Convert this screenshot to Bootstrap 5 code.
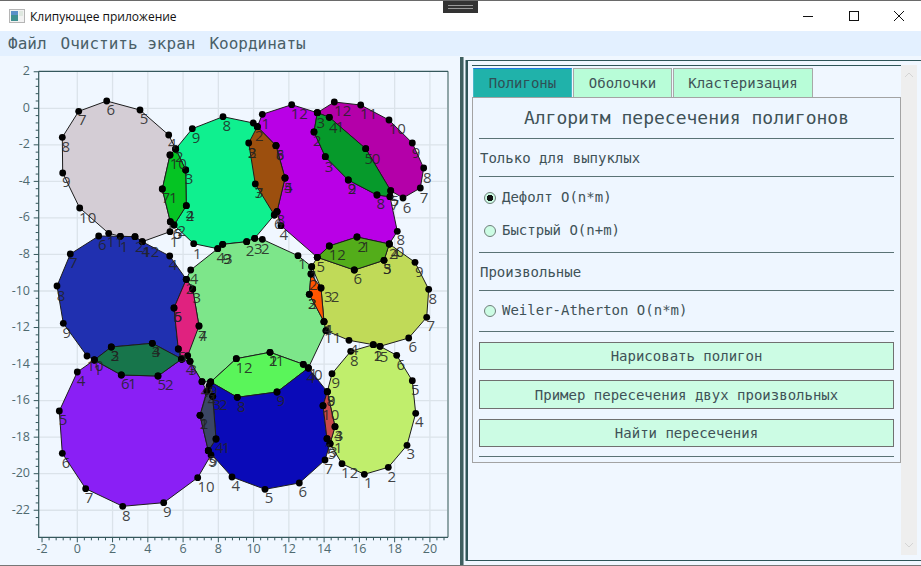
<!DOCTYPE html>
<html lang="ru">
<head>
  <meta charset="UTF-8">
  <title>Клипующее приложение</title>
  <meta name="viewport" content="width=device-width, initial-scale=1.0">
  <link href="https://cdn.jsdelivr.net/npm/bootstrap@5.3.0/dist/css/bootstrap.min.css" rel="stylesheet">
  <style>
    html, body { height: 100%; overflow: hidden; }
    body { background: #f0f7ff; color: #3f5257; font-family: "DejaVu Sans Mono", "Liberation Mono", monospace; font-size: 14px; }
    .app-window { height: 566px; border-top: 1px solid #6a6a6a; border-bottom: 1px solid #777; }
    .title-bar { height: 30px; background: #fff; font: 12px "Open Sans", "Noto Sans", sans-serif; color: #111; padding-left: 9px; }
    .title-bar svg { margin-right: 5px; }
    .win-btns { margin-right: -1px; }
    .win-btn { width: 45.5px; height: 30px; }
    .win-btn svg { margin: 0; }
    .drag-handle { position: absolute; left: 443px; top: 0; width: 35px; height: 12px; background: #333; }
    .drag-handle::after { content: ""; display: block; margin: 4px 5px 0; height: 4px; border-top: 1px solid #999; border-bottom: 1px solid #999; }
    .menu-bar { height: 25px; background: #e3f0ff; font-size: 16px; padding-left: 8px; gap: 14px; color: #4a5f68; }
    .plot-pane { width: 460px; }
    .plot-pane svg { display: block; }
    .plot-pane text { font: 15px "Open Sans", "Noto Sans", sans-serif; fill: #222; fill-opacity: .85; }
    .plot-pane .tick-label { font-size: 12.5px; fill: #4f6a70; fill-opacity: 1; }
    .split-bar { width: 3px; background: #3f5f60; margin-top: 1px; box-shadow: 1px 0 0 #8fa5a8; }
    .right-pane { margin-left: 3px; margin-top: 4px; border-top: 1px solid #2f5558; border-left: 2px solid #2f5558; border-bottom: 1px solid #2f5558; margin-bottom: 4px; padding: 4px 0 0 4px; box-shadow: -1px 0 0 #8fa5a8; }
    .right-col { width: 429px; border-top: 1px solid #2f5558; padding-top: 2px; }
    .fake-scroll { width: 16px; margin: 0 4px 5px 0; background: #eeeeee; position: relative; }
    .fake-scroll svg { position: absolute; left: 3px; }
    .algo-tabs { border-bottom: 0; padding-left: 1px; gap: 1px; }
    .algo-tabs .nav-link { width: 99px; height: 29px; padding: 0; border-radius: 0; border: 1px solid #a8a8a8; border-bottom: 0; background: #b8fdd8; color: #3f5257; font-size: 14px; line-height: 28px; margin: 0; text-align: center; }
    .algo-tabs .nav-link.wide-tab { width: 140px; }
    .algo-tabs .nav-link.active { background: #20b2aa; color: #2f4f55; border: 1px solid #46b8c8; border-top-color: #1e78e0; border-bottom: 0; }
    .tab-holder { height: 366px; border: 1px solid #a3a3a3; background: #eef6ff; padding: 0 6px; }
    .pane-title { height: 40px; font-size: 18px; line-height: 40px; text-align: center; }
    .sep-line { margin: 0; opacity: 1; border: 0; height: 1px; background: #5a7275; }
    .group-label { height: 37px; line-height: 38px; padding-left: 1px; }
    .algo-radio { height: 33px; min-height: 0; margin: 0; padding-left: 5px; display: flex; align-items: center; gap: 6px; }
    .algo-radio .form-check-input { float: none; width: 12px; height: 12px; margin: 0; background-color: #ccfce4; border: 1px solid #6f7f7a; }
    .algo-radio .form-check-input:checked { background-color: #ccfce4; border-color: #6f7f7a; background-image: radial-gradient(circle, #111 0 3px, transparent 3.5px); }
    .algo-radio .form-check-label { color: #3f5257; }
    .radio-first { margin-top: 4px; }
    .radio-last { margin-bottom: 5px; }
    .radio-single { margin: 3px 0 4px; }
    .draw-btn { display: block; width: 100%; height: 28px; padding: 0; margin-bottom: 10px; border: 1px solid #707070; border-radius: 0; background: #ccfce4; color: #3f5257; font-size: 14px; line-height: 26px; }
    .draw-btn.tall-btn { height: 29px; }
    .draw-btn.last-btn { margin-bottom: 9px; }
    .btn-top-sep { margin-bottom: 10px; }
  </style>
</head>
<body>
  <div class="app-window d-flex flex-column position-relative">
    <div class="drag-handle"></div>
    <div class="title-bar d-flex align-items-center">
      <svg width="16" height="14" viewBox="0 0 16 14"><rect x=".5" y=".5" width="15" height="13" fill="#f2f2f2" stroke="#b5b5b5"/><rect x="2" y="2" width="7" height="10" fill="#3f8f8f"/><rect x="2" y="2" width="7" height="4" fill="#5a8fc8"/><rect x="10" y="2" width="4" height="5" fill="#dfe8e0"/></svg>
      <span>Клипующее приложение</span>
      <div class="ms-auto d-flex win-btns">
        <div class="win-btn d-flex align-items-center justify-content-center"><svg width="12" height="12"><path d="M1 6.5H11" stroke="#111"/></svg></div>
        <div class="win-btn d-flex align-items-center justify-content-center"><svg width="12" height="12"><rect x="1.5" y="1.5" width="9" height="9" fill="none" stroke="#111"/></svg></div>
        <div class="win-btn d-flex align-items-center justify-content-center"><svg width="12" height="12"><path d="M1 1L11 11M11 1L1 11" stroke="#111"/></svg></div>
      </div>
    </div>
    <div class="menu-bar d-flex align-items-center">
      <span>Файл</span><span>Очистить экран</span><span>Координаты</span>
    </div>
    <div class="d-flex flex-grow-1" style="min-height:0">
      <div class="plot-pane"><svg id="plot" width="460" height="509" viewBox="0 56 460 509"></svg></div>
      <div class="split-bar"></div>
      <div class="right-pane flex-grow-1 d-flex">
        <div class="right-col">
          <ul class="nav nav-tabs algo-tabs">
            <li class="nav-item"><a class="nav-link active" href="#">Полигоны</a></li>
            <li class="nav-item"><a class="nav-link" href="#">Оболочки</a></li>
            <li class="nav-item"><a class="nav-link wide-tab" href="#">Кластеризация</a></li>
          </ul>
          <div class="tab-holder">
            <div class="pane-title">Алгоритм пересечения полигонов</div>
            <hr class="sep-line">
            <div class="group-label">Только для выпуклых</div>
            <hr class="sep-line">
            <div class="form-check algo-radio radio-first"><input class="form-check-input" type="radio" name="algo" id="r1" checked><label class="form-check-label" for="r1">Дефолт O(n*m)</label></div>
            <div class="form-check algo-radio radio-last"><input class="form-check-input" type="radio" name="algo" id="r2"><label class="form-check-label" for="r2">Быстрый O(n+m)</label></div>
            <hr class="sep-line">
            <div class="group-label">Произвольные</div>
            <hr class="sep-line">
            <div class="form-check algo-radio radio-single"><input class="form-check-input" type="radio" name="algo" id="r3"><label class="form-check-label" for="r3">Weiler-Atherton O(n*m)</label></div>
            <hr class="sep-line btn-top-sep">
            <button class="btn draw-btn" type="button">Нарисовать полигон</button>
            <button class="btn draw-btn tall-btn" type="button">Пример пересечения двух произвольных</button>
            <button class="btn draw-btn last-btn" type="button">Найти пересечения</button>
            <hr class="sep-line">
          </div>
        </div>
        <div class="fake-scroll ms-0 flex-grow-0 flex-shrink-0">
          <svg width="10" height="6" style="top:7px"><path d="M1 5L5 1L9 5" fill="none" stroke="#d4d4d4"/></svg>
          <svg width="10" height="6" style="bottom:7px"><path d="M1 1L5 5L9 1" fill="none" stroke="#d4d4d4"/></svg>
        </div>
      </div>
    </div>
  </div>

  <script>
    // полигоны в пикселях снимка
    const polys = [
      ['#d4cdd5', [[106.7,101],[140,110],[168.7,135],[175.7,149],[170,155],[162.3,189],[170.3,221.7],[170,231.7],[142.3,241.7],[135,236.7],[120.3,236.3],[108.7,233.3],[79.7,208],[62.7,173],[62.3,137.3],[78.7,111.3]]],
      ['#0ff08f', [[223,116.7],[192.3,128.7],[175.7,149],[185.7,170],[186.3,205.7],[174,225],[193.7,243.7],[217.7,248.7],[222.7,244.3],[246.7,241.7],[254.7,238.3],[274.3,215],[277,211.7],[285,178],[276,145.7],[257.3,126.7],[253.3,123]]],
      ['#05c423', [[175.7,149],[170,155],[162.3,189],[170.3,221.7],[174,225],[186.3,205.7],[185.7,170]]],
      ['#e040d0', [[222.7,247],[246.7,241.7],[224,250]]],
      ['#b900e6', [[262.3,114.3],[291.7,104.7],[317.3,112.7],[314,132],[325.3,156.7],[348.3,180],[377,195],[390,196.7],[397.3,231.3],[389.3,244],[357,237],[329.3,246],[317.3,257.3],[281,225.7],[277,211.7],[285,178],[276,145.7],[257.3,126.7]]],
      ['#9c4f0e', [[257.3,126.7],[248.7,143],[255.3,184],[274.3,215],[277,211.7],[285,178],[276,145.7]]],
      ['#b400a9', [[334.3,102],[360.7,105],[389,120],[412.3,143],[423.7,168],[420.3,188],[403,198],[390.7,190.7],[365.7,148.7],[329.3,117.3],[317.3,112.7]]],
      ['#069a2b', [[317.3,112.7],[329.3,117.3],[365.7,148.7],[390.7,190.7],[390,196.7],[377,195],[348.3,180],[325.3,156.7],[314,132]]],
      ['#2030b0', [[98.7,236],[120.3,236.3],[135,236.7],[142.3,241.7],[169.7,256],[186.3,279.3],[174,308],[178.3,349],[181.7,359],[152.3,343.3],[111.3,347],[94.3,360],[87,356],[63.3,323.3],[57,286],[70.3,254]]],
      ['#7de68a', [[190.7,270],[217.7,248.7],[222.7,244.3],[246.7,241.7],[254.7,238.3],[262.3,239.3],[298,255.7],[311.7,266.7],[311,274],[309.3,294.3],[324,321.7],[326,330.7],[308.3,368],[303.3,364.3],[270,352.3],[236.3,358.7],[210.7,382],[202,381.7],[190,361.3],[181.7,359],[199,326],[192.7,289],[186.3,279.3]]],
      ['#e0227f', [[186.3,279.3],[192.7,289],[199,326],[187.7,355.7],[181.7,359],[178.3,349],[174,308]]],
      ['#c0da58', [[317.3,257.3],[354.3,270],[384,260.3],[389.3,244],[415,262.3],[428.7,289.3],[426.7,317.3],[408.7,338],[380,346.3],[373.3,344.7],[349,340.3],[326,330.7],[324,321.7],[321,288],[311.7,266.7]]],
      ['#53ad1a', [[329.3,246],[357,237],[389.3,244],[384,260.3],[354.3,270],[317.3,257.3]]],
      ['#ff5500', [[311,274],[321,288],[324,321.7],[309.3,294.3]]],
      ['#c0ee6c', [[350.7,351.3],[373.3,344.7],[380,346.3],[396.7,355.3],[412.3,380.7],[415.7,413.3],[407,445.3],[388.3,467.3],[364.3,474.3],[342,463.7],[330,443.7],[335,426.7],[327.3,391.7],[332,373.7]]],
      ['#8a1ff5', [[94.3,360],[121.3,375],[158,376],[181.7,359],[190,361.3],[202,381.7],[206.7,391.3],[200,415.3],[208.3,450.7],[211,455],[197.7,477.7],[163.7,502.7],[122.7,506.3],[85.7,488.7],[62.3,453.3],[59.3,411],[77.3,372]]],
      ['#17754b', [[94.3,360],[111.3,347],[152.3,343.3],[181.7,359],[158,376],[121.3,375]]],
      ['#5af55a', [[236.3,358.7],[270,352.3],[303.3,364.3],[308.3,368],[277,392],[237.3,397.3],[210.7,382]]],
      ['#0a0ab8', [[210.7,382],[237.3,397.3],[277,392],[308.3,368],[327.3,391.7],[323,405.7],[327,438.7],[330,443.7],[325,460],[299.3,483],[265,489.3],[232,477],[208.3,450.7],[216,439],[212.7,396.3]]],
      ['#3b4664', [[209,386],[212.7,396.3],[216,439],[208.3,450.7],[200,415.3]]],
      ['#c84a4a', [[327.3,391.7],[323,405.7],[327,438.7],[330,443.7],[335,426.7]]]
    ];

    // подписи: координаты с увеличенного снимка (x3), вторая группа со сдвигом 283
    const labelsTop = '6,332,326 5,432,355 4,517,428 7,247,358 8,197,439 9,199,543 10,263,650 11,345,722 1,372,737 2,418,738 4,437,752 12,452,752 2,538,468 10,535,490 3,567,535 7,497,590 1,520,590 4,570,645 2,570,645 6,530,700 2,545,690 5,535,700 1,522,722 8,680,375 9,588,410 1,592,758 4,662,772 9,680,775 3,685,775 2,750,750 3,775,745 2,796,745 2,757,455 3,757,455 2,778,405 1,797,368 8,840,462 6,840,462 5,865,560 4,865,560 3,777,577 7,777,577 6,835,670 8,842,658 12,898,340 4,851,703 8,1202,717 9,1056,565 2,1056,565 8,1142,610 7,1184,612 5,1184,600 6,1221,620 7,1272,590 8,1282,530 9,1248,455 10,1192,385 11,1106,340 12,1028,330 3,962,365 4,1000,382 1,1020,378 2,952,420 3,987,497 5,1106,473 0,1128,473 12,1012,763 2,1085,737 1,1098,737 6,1073,834 5,1162,805 3,1162,805 4,1185,760 0,1200,752 2,1180,760 1,907,790 4,582,833 5,962,798 9,1258,812 7,220,787 6,307,733 4,519,793 1,942,825';
    const labelsLow = '8,183,35 9,200,146 2,570,15 3,590,42 6,533,100 5,533,100 7,607,155 4,608,155 5,547,218 3,345,215 2,345,215 3,468,205 4,468,205 6,376,300 1,397,300 5,485,304 2,508,304 1,293,258 10,285,245 4,570,258 3,578,258 4,243,291 5,189,408 6,198,538 7,267,643 8,379,696 9,502,684 10,618,610 4,615,323 9,640,320 4,635,350 3,650,363 2,670,363 8,724,370 9,842,350 12,732,253 1,820,232 2,820,232 1,840,232 0,955,272 1,940,270 4,932,283 1,612,421 2,612,421 4,658,492 1,678,492 5,637,532 9,640,534 4,707,605 5,807,643 6,908,624 7,986,555 8,992,350 9,994,350 10,992,393 4,1015,456 3,1017,456 5,995,510 3,1000,505 1,1015,493 1,985,495 9,1007,297 12,1049,568 1,1105,597 2,1175,578 3,1232,510 4,1258,414 5,1246,318 6,1202,243 8,1063,231 4,1062,198 2,1135,215 5,1152,218 1,1132,215 8,1298,45 7,1292,125 6,1238,188 3,985,40 2,1005,40 11,998,162 2,940,3 2,937,60 3,937,60 4,985,137 1,985,137';

    const x0 = 77.3, xStep = 17.63, y0 = 108.3, yStep = 18.27;
    const L = 38.7, R = 448, T = 71.3, B = 537.3;
    let s = '';

    // сетка
    for (let v = 0; v <= 20; v += 2) s += `<line x1="${x0 + v * xStep}" x2="${x0 + v * xStep}" y1="${T}" y2="${B}" stroke="#dbe3ea" stroke-width="1.3"/>`;
    for (let v = 0; v >= -22; v -= 2) s += `<line x1="${L}" x2="${R}" y1="${y0 - v * yStep}" y2="${y0 - v * yStep}" stroke="#dbe3ea" stroke-width="1.3"/>`;

    polys.forEach(p => {
      s += `<polygon fill="${p[0]}" stroke="#1d1d1d" stroke-width="1" points="${p[1].map(q => q.join(',')).join(' ')}"/>`;
    });

    // оси и рамка
    s += `<path d="M${R} ${T}V${B}" stroke="#8fa5a8" stroke-width="2"/>`;
    s += `<path d="M${L} ${T}H${R}M${L} ${T}V${B}H${R}" fill="none" stroke="#35585c" stroke-width="1.2"/>`;
    for (let v = 2; v >= -23; v -= 0.4) {
      const y = y0 - v * yStep, major = Math.abs(v / 2 - Math.round(v / 2)) < 0.01;
      if (y <= B) s += `<line x1="${L - (major ? 5 : 3)}" x2="${L}" y1="${y}" y2="${y}" stroke="#35585c"/>`;
    }
    for (let v = -2; v <= 20.8; v += 0.4) {
      const x = x0 + v * xStep, major = Math.abs(v / 2 - Math.round(v / 2)) < 0.01;
      s += `<line x1="${x}" x2="${x}" y1="${B}" y2="${B + (major ? 5 : 3)}" stroke="#35585c"/>`;
    }
    for (let v = 2; v >= -22; v -= 2) s += `<text class="tick-label" text-anchor="end" dominant-baseline="central" x="30" y="${y0 - v * yStep - 1}">${v}</text>`;
    for (let v = -2; v <= 20; v += 2) s += `<text class="tick-label" text-anchor="middle" x="${x0 + v * xStep}" y="553">${v}</text>`;

    // вершины
    polys.forEach(p => {
      if (p[0] === '#e040d0') return;
      p[1].forEach(q => { s += `<circle cx="${q[0]}" cy="${q[1]}" r="3.4" fill="#000"/>`; });
    });

    const addLabels = (str, dy) => str.split(' ').forEach(it => {
      const [t, x, y] = it.split(',');
      s += `<text text-anchor="middle" dominant-baseline="central" x="${(x / 3).toFixed(1)}" y="${(y / 3 + dy).toFixed(1)}">${t}</text>`;
    });
    addLabels(labelsTop, 0);
    addLabels(labelsLow, 283);

    document.getElementById('plot').innerHTML = s;
  </script>
  <script src="https://cdn.jsdelivr.net/npm/bootstrap@5.3.0/dist/js/bootstrap.bundle.min.js"></script>
</body>
</html>
